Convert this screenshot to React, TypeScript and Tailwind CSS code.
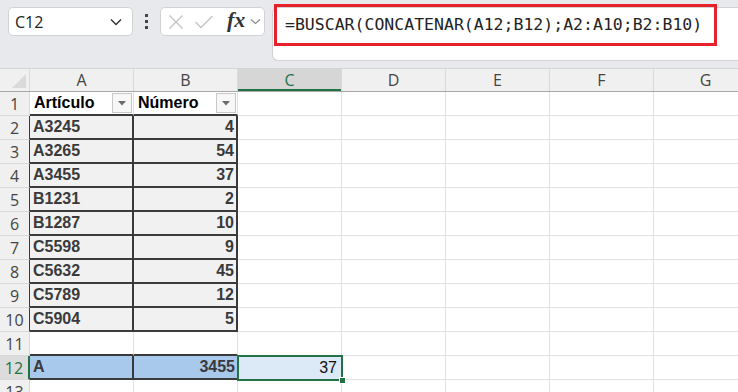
import React from "react";

const COLS = ["A", "B", "C", "D", "E", "F", "G"];
const DATA: [string, string][] = [
  ["A3245", "4"],
  ["A3265", "54"],
  ["A3455", "37"],
  ["B1231", "2"],
  ["B1287", "10"],
  ["C5598", "9"],
  ["C5632", "45"],
  ["C5789", "12"],
  ["C5904", "5"],
];

function Filter() {
  return (
    <div className="w-[20px] h-[20px] border border-[#c8c8c8] bg-[#f7f7f7] flex items-center justify-center">
      <svg width="8" height="5" viewBox="0 0 8 5">
        <path d="M0 0 L8 0 L4 4.5 Z" fill="#6b6b6b" />
      </svg>
    </div>
  );
}

function RowHead({ n, sel, dark }: { n: number; sel?: boolean; dark?: boolean }) {
  return (
    <div
      className={`w-[30px] shrink-0 h-full flex items-center justify-center border-b border-[#d9d9d9] border-r text-[16px] ${
        sel ? "bg-[#dcdcdc] text-[#217346] border-r-[#217346] border-r-2" : "bg-[#f0f0f0] text-[#444]"
      } ${dark ? "border-r-[#3a3a3a]" : ""}`}
      style={{ fontFamily: "'Open Sans', 'Noto Sans', sans-serif" }}
    >
      {n}
    </div>
  );
}

function Empty({ n }: { n: number }) {
  return (
    <>
      {Array.from({ length: n }).map((_, i) => (
        <div key={i} className="w-[104px] shrink-0 h-full border-r border-b border-[#e1e1e1]" />
      ))}
    </>
  );
}

const bold = "font-bold text-[16px] text-[#3a3a3a]";

export default function App() {
  return (
    <div
      className="w-[738px] h-[392px] overflow-hidden bg-white relative"
      style={{ fontFamily: "'Liberation Sans', Arial, sans-serif" }}
    >
      {/* Top formula bar */}
      <div className="h-[69px] bg-[#e8e9ed] border-b border-[#d4d4d4] flex items-start pt-[7px] pl-[8px] relative">
        <div className="w-[125px] h-[29px] bg-white border border-[#d2d2d2] rounded-[5px] flex items-center justify-between pl-[6px] pr-[10px]">
          <span className="text-[16px] text-[#222]" style={{ fontFamily: "'Open Sans', sans-serif" }}>C12</span>
          <svg width="12" height="8" viewBox="0 0 12 8">
            <path d="M1 1.5 L6 6.5 L11 1.5" stroke="#333" strokeWidth="1.4" fill="none" />
          </svg>
        </div>
        <div className="w-[27px] h-[29px] flex flex-col items-center justify-center gap-[3px]">
          <div className="w-[3px] h-[3px] bg-[#444]" />
          <div className="w-[3px] h-[3px] bg-[#444]" />
          <div className="w-[3px] h-[3px] bg-[#444]" />
        </div>
        <div className="w-[105px] h-[29px] bg-white border border-[#d2d2d2] rounded-[5px] flex items-center pl-[7px]">
          <svg width="16" height="16" viewBox="0 0 16 16" className="mr-[10px]">
            <path d="M1.5 1.5 L14.5 14.5 M14.5 1.5 L1.5 14.5" stroke="#c4c4c4" strokeWidth="1.3" />
          </svg>
          <svg width="20" height="16" viewBox="0 0 20 16" className="mr-[13px]">
            <path d="M1.5 8 L7 13.5 L18.5 2" stroke="#c4c4c4" strokeWidth="1.3" fill="none" />
          </svg>
          <span
            className="text-[22px] italic font-bold text-[#333] leading-none mr-[5px] -mt-[3px]"
            style={{ fontFamily: "'Liberation Serif', 'DejaVu Serif', serif" }}
          >
            fx
          </span>
          <svg width="11" height="7" viewBox="0 0 11 7">
            <path d="M1 1.5 L5.5 5.5 L10 1.5" stroke="#8a8a8a" strokeWidth="1.1" fill="none" />
          </svg>
        </div>
        <div className="ml-[7px] flex-1 h-[54px] bg-white border border-r-0 border-[#d2d2d2] rounded-l-[6px]" />
        {/* red annotation */}
        <div className="absolute left-[274px] top-[4px] w-[443px] h-[42px] border-[3px] border-[#e8202a] flex items-center pl-[8px]">
          <span
            className="text-[16.5px] text-[#222] whitespace-nowrap"
            style={{ fontFamily: "'DejaVu Sans Mono', 'Liberation Mono', monospace" }}
          >
            =BUSCAR(CONCATENAR(A12;B12);A2:A10;B2:B10)
          </span>
        </div>
      </div>

      {/* Column headers */}
      <div
        className="flex h-[23px] border-b border-[#a8a8a8]"
        style={{ fontFamily: "'Open Sans', 'Noto Sans', sans-serif" }}
      >
        <div className="w-[30px] shrink-0 h-full bg-[#f0f0f0] border-r border-[#d9d9d9] relative overflow-hidden">
          <svg width="30" height="23" viewBox="0 0 30 23" className="absolute inset-0">
            <path d="M26 5 L26 19 L12 19 Z" fill="#dadada" />
          </svg>
        </div>
        {COLS.map((c) => (
          <div
            key={c}
            className={`w-[104px] shrink-0 h-full flex items-center justify-center text-[16px] border-r border-[#d9d9d9] ${
              c === "C" ? "bg-[#d6d6d6] text-[#217346] shadow-[inset_0_-2px_0_#217346]" : "bg-[#f0f0f0] text-[#444]"
            }`}
          >
            {c}
          </div>
        ))}
      </div>

      {/* Row 1 */}
      <div className="flex h-[24px]">
        <RowHead n={1} />
        <div className="w-[104px] shrink-0 h-full bg-white border-b-2 border-b-[#3a3a3a] border-r border-r-[#e1e1e1] flex items-center justify-between pl-[4px] pr-[1px] font-bold text-[16px] text-black">
          <span>Artículo</span>
          <Filter />
        </div>
        <div className="w-[104px] shrink-0 h-full bg-white border-b-2 border-b-[#3a3a3a] border-r border-r-[#e1e1e1] flex items-center justify-between pl-[4px] pr-[1px] font-bold text-[16px] text-black">
          <span>Número</span>
          <Filter />
        </div>
        <Empty n={5} />
      </div>

      {/* Data rows */}
      {DATA.map(([a, b], i) => (
        <div key={a} className="flex h-[24px]">
          <RowHead n={i + 2} dark />
          <div className={`w-[104px] shrink-0 h-full bg-[#f1f1f1] border-b-2 border-r-2 border-[#3a3a3a] flex items-center pl-[3px] ${bold}`}>
            {a}
          </div>
          <div className={`w-[104px] shrink-0 h-full bg-[#f1f1f1] border-b-2 border-r-2 border-[#3a3a3a] flex items-center justify-end pr-[2px] ${bold}`}>
            {b}
          </div>
          <Empty n={5} />
        </div>
      ))}

      {/* Row 11 */}
      <div className="flex h-[24px]">
        <RowHead n={11} />
        <div className="w-[104px] shrink-0 h-full border-r border-[#e1e1e1] border-b-2 border-b-[#3a3a3a]" />
        <div className="w-[104px] shrink-0 h-full border-r border-[#e1e1e1] border-b-2 border-b-[#3a3a3a]" />
        <Empty n={5} />
      </div>

      {/* Row 12 */}
      <div className="flex h-[24px]">
        <RowHead n={12} sel />
        <div className={`w-[104px] shrink-0 h-full bg-[#a9c9ec] border-b-2 border-r-2 border-[#3a3a3a] flex items-center pl-[3px] ${bold}`}>
          A
        </div>
        <div className={`w-[104px] shrink-0 h-full bg-[#a9c9ec] border-b-2 border-[#3a3a3a] flex items-center justify-end pr-[3px] ${bold}`}>
          3455
        </div>
        <div className="w-[104px] shrink-0 h-full bg-[#dce9f7] flex items-center justify-end pr-[5px] text-[16px] text-[#111] relative">
          37
          <div className="absolute -left-[1px] -top-[1px] -right-[1px] -bottom-[1px] border-2 border-[#217346]" />
          <div className="absolute -right-[4px] -bottom-[4px] w-[7px] h-[7px] bg-[#217346] border border-white" />
        </div>
        <Empty n={4} />
      </div>

      {/* Row 13 */}
      <div className="flex h-[24px]">
        <RowHead n={13} />
        <Empty n={7} />
      </div>
    </div>
  );
}
